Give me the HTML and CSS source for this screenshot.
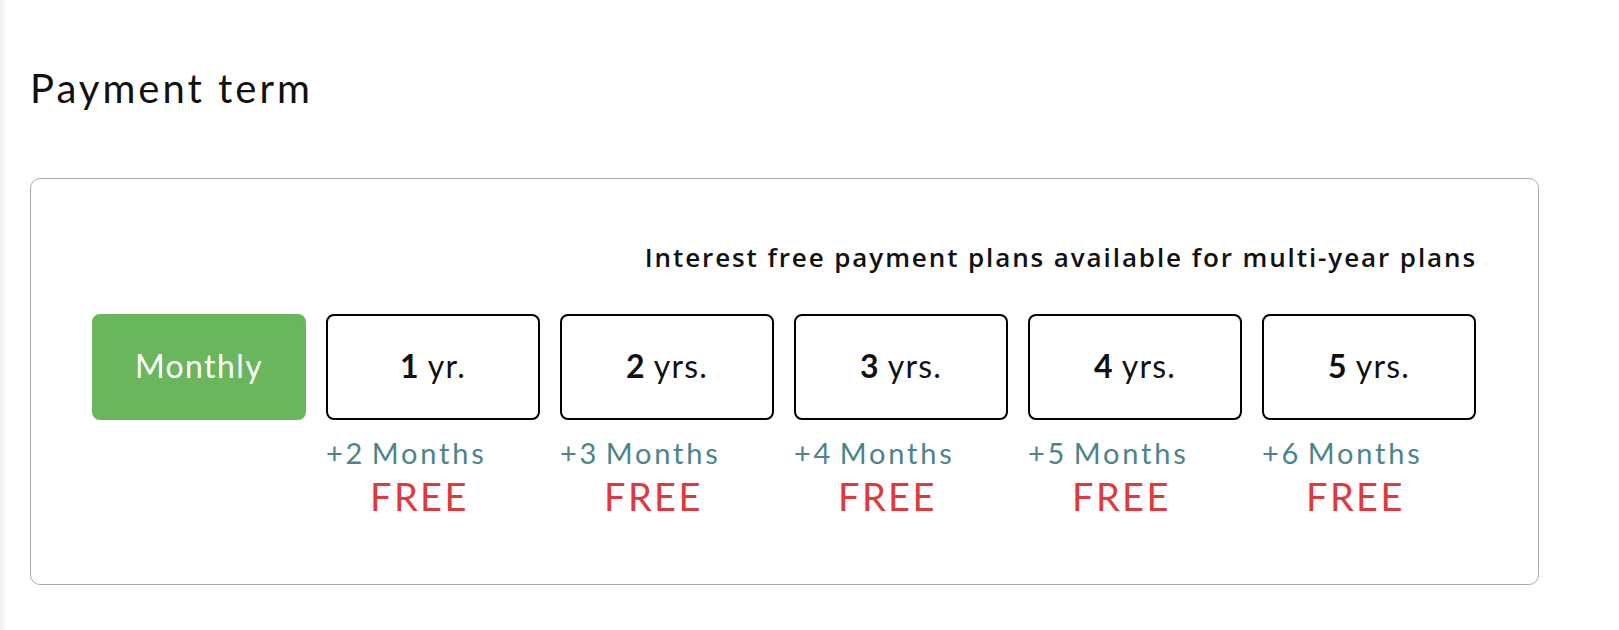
FILE: index.html
```html
<!DOCTYPE html>
<html lang="en">
<head>
    <meta charset="UTF-8">
    <meta name="viewport" content="width=device-width, initial-scale=1.0">
    <title>Payment term</title>
    <link rel="stylesheet" href="styles.css">
</head>
<body>
    <div class="page">
        <h2 class="section-title">Payment term</h2>

        <div class="term-card">
            <p class="term-note">Interest free payment plans available for multi-year plans</p>

            <div class="term-options">
                <div class="term-option">
                    <button class="term-btn active">Monthly</button>
                </div>
                <div class="term-option">
                    <button class="term-btn"><span class="num">1</span> yr.</button>
                    <div class="term-bonus">
                        <span class="months">+2&#8201;Months</span>
                        <span class="free">FREE</span>
                    </div>
                </div>
                <div class="term-option">
                    <button class="term-btn"><span class="num">2</span> yrs.</button>
                    <div class="term-bonus">
                        <span class="months">+3&#8201;Months</span>
                        <span class="free">FREE</span>
                    </div>
                </div>
                <div class="term-option">
                    <button class="term-btn"><span class="num">3</span> yrs.</button>
                    <div class="term-bonus">
                        <span class="months">+4&#8201;Months</span>
                        <span class="free">FREE</span>
                    </div>
                </div>
                <div class="term-option">
                    <button class="term-btn"><span class="num">4</span> yrs.</button>
                    <div class="term-bonus">
                        <span class="months">+5&#8201;Months</span>
                        <span class="free">FREE</span>
                    </div>
                </div>
                <div class="term-option">
                    <button class="term-btn"><span class="num">5</span> yrs.</button>
                    <div class="term-bonus">
                        <span class="months">+6&#8201;Months</span>
                        <span class="free">FREE</span>
                    </div>
                </div>
            </div>
        </div>
    </div>
</body>
</html>
```

FILE: styles.css
```css
* {
    margin: 0;
    padding: 0;
    box-sizing: border-box;
}

body {
    background: linear-gradient(to right, #ededed 0, #f8f8f8 4px, #fff 8px);
    font-family: 'Lato', 'Open Sans', sans-serif;
    color: #111;
}

.page {
    padding: 64px 0 0 30px;
}

.section-title {
    font-size: 40px;
    line-height: 48px;
    font-weight: 400;
    letter-spacing: 3px;
    margin-bottom: 66px;
}

.term-card {
    width: 1509px;
    border: 1px solid #ababab;
    border-radius: 10px;
    padding: 63px 61px 66px 61px;
}

.term-note {
    text-align: right;
    font-family: 'Open Sans', sans-serif;
    font-size: 26px;
    line-height: 30px;
    font-weight: 600;
    letter-spacing: 1.9px;
    margin-bottom: 42px;
}

.term-options {
    display: flex;
    gap: 20px;
}

.term-option {
    width: 214px;
}

.term-btn {
    display: flex;
    align-items: center;
    justify-content: center;
    width: 214px;
    height: 106px;
    border: 2px solid #000;
    border-radius: 8px;
    background: #fff;
    font-family: inherit;
    font-size: 32px;
    letter-spacing: 1.2px;
    color: #111;
    cursor: pointer;
    padding-bottom: 4px;
}

.term-btn .num {
    font-weight: 700;
    margin-right: 8px;
}

.term-btn.active {
    background: #6ab65d;
    border-color: #6ab65d;
    color: #fff;
    font-weight: 400;
    letter-spacing: 1.4px;
}

.term-bonus {
    display: flex;
    flex-direction: column;
    margin-top: 15px;
}

.months {
    font-size: 29px;
    line-height: 35px;
    color: #4b858b;
    letter-spacing: 2.8px;
}

.free {
    padding-left: 44px;
    margin-top: 4px;
    font-size: 38px;
    line-height: 44px;
    color: #e0393c;
    letter-spacing: 2.4px;
}
```
